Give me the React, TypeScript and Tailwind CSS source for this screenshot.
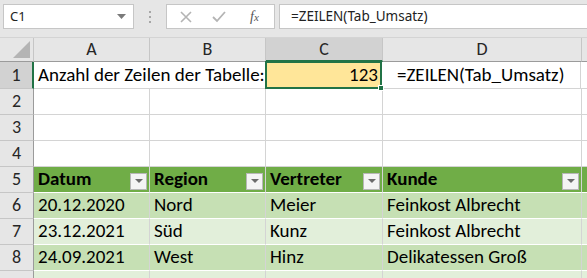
import React from 'react';

const font = { fontFamily: 'Carlito, Calibri, "Open Sans", sans-serif' };

const cols = [
    { key: 'A', w: 'w-[116px]' },
    { key: 'B', w: 'w-[116px]' },
    { key: 'C', w: 'w-[117px]' },
    { key: 'D', w: 'w-[199px]' },
];

const FilterBtn = () => (
    <div className="absolute right-[2px] bottom-[2px] w-[17px] h-[17px] bg-[#f4f4f4] border border-[#b7b7b7] flex items-center justify-center">
        <svg width="8" height="5" viewBox="0 0 8 5">
            <path d="M0 0 L8 0 L4 4 Z" fill="#6b6b6b" />
        </svg>
    </div>
);

const tableRows = [
    { n: 6, bg: 'bg-[#c6e0b4]', cells: ['20.12.2020', 'Nord', 'Meier', 'Feinkost Albrecht'] },
    { n: 7, bg: 'bg-[#e2efda]', cells: ['23.12.2021', 'Süd', 'Kunz', 'Feinkost Albrecht'] },
    { n: 8, bg: 'bg-[#c6e0b4]', cells: ['24.09.2021', 'West', 'Hinz', 'Delikatessen Groß'] },
];

const RowHead = ({ n, active }: { n?: number; active?: boolean }) => (
    <div
        className={`w-[34px] shrink-0 flex items-center justify-center text-[18px] text-[#262626] border-b border-[#c6c6c6] ${
            active ? 'bg-[#d2d2d2] border-r-2 border-r-[#217346]' : 'bg-[#e6e6e6] border-r border-r-[#9b9b9b]'
        }`}
    >
        {n}
    </div>
);

export default function App() {
    return (
        <div className="w-[587px] h-[278px] overflow-hidden bg-white select-none" style={font}>
            {/* Formula bar */}
            <div className="h-[38px] bg-[#e6e6e6] flex items-start pt-[4px] pl-[3px] gap-0 border-b border-[#d4d4d4]">
                <div className="w-[131px] h-[25px] bg-white border border-[#c6c6c6] flex items-center justify-between pl-[6px] pr-[7px]" style={{ fontFamily: '"Noto Sans", "Open Sans", sans-serif' }}>
                    <span className="text-[13px] text-[#222]">C1</span>
                    <svg width="9" height="5" viewBox="0 0 9 5">
                        <path d="M0 0 L9 0 L4.5 5 Z" fill="#7a7a7a" />
                    </svg>
                </div>
                <div className="w-[32px] h-[25px] flex flex-col items-center justify-center gap-[3px]">
                    <span className="w-[2px] h-[2px] bg-[#a6a6a6]" />
                    <span className="w-[2px] h-[2px] bg-[#a6a6a6]" />
                    <span className="w-[2px] h-[2px] bg-[#a6a6a6]" />
                </div>
                <div className="w-[109px] h-[25px] bg-white border border-[#c6c6c6] flex items-center pl-[13px] gap-[20px]">
                    <svg width="12" height="12" viewBox="0 0 12 12">
                        <path d="M1 1 L11 11 M11 1 L1 11" stroke="#b4b4b4" strokeWidth="1.6" />
                    </svg>
                    <svg width="14" height="12" viewBox="0 0 14 12">
                        <path d="M1 6 L5 10 L13 1" stroke="#b4b4b4" strokeWidth="1.8" fill="none" />
                    </svg>
                    <span className="text-[14px] italic text-[#555] ml-[4px]" style={{ fontFamily: '"Liberation Serif", serif' }}>
                        f<span className="text-[11px]">x</span>
                    </span>
                </div>
                <div className="ml-[4px] flex-1 h-[25px] bg-white border border-[#c6c6c6] border-r-0 flex items-center pl-[11px]" style={{ fontFamily: '"Noto Sans", "Open Sans", sans-serif' }}>
                    <span className="text-[13.5px] text-[#222]">=ZEILEN(Tab_Umsatz)</span>
                </div>
            </div>

            {/* Column headers */}
            <div className="h-[24px] flex bg-[#e6e6e6]">
                <div className="w-[34px] shrink-0 relative border-r border-[#c6c6c6] border-b border-b-[#9b9b9b]">
                    <svg className="absolute right-[3px] bottom-[3px]" width="17" height="17" viewBox="0 0 17 17">
                        <path d="M17 0 L17 17 L0 17 Z" fill="#b4b4b4" />
                    </svg>
                </div>
                {cols.map((c) => (
                    <div
                        key={c.key}
                        className={`${c.w} shrink-0 flex items-center justify-center text-[18px] text-[#262626] border-r border-[#c6c6c6] ${
                            c.key === 'C' ? 'bg-[#d2d2d2] border-b-2 border-b-[#217346]' : 'border-b border-b-[#9b9b9b]'
                        }`}
                    >
                        {c.key}
                    </div>
                ))}
                <div className="flex-1 border-b border-b-[#9b9b9b]" />
            </div>

            {/* Row 1 */}
            <div className="h-[27px] flex">
                <RowHead n={1} active />
                <div className="w-[232px] shrink-0 flex items-center pl-[4px] text-[19px] text-black border-r border-b border-[#d4d4d4] whitespace-nowrap">
                    Anzahl der Zeilen der Tabelle:
                </div>
                <div className="w-[117px] shrink-0 relative bg-[#ffe699] border-2 border-[#217346] flex items-center justify-end pr-[2px] text-[19px] text-black -ml-[1px] -mt-[1px] h-[28px]">
                    123
                    <div className="absolute -right-[4px] -bottom-[4px] w-[6px] h-[6px] bg-[#217346] border border-white" />
                </div>
                <div className="w-[199px] shrink-0 flex items-center pl-[15px] text-[19px] text-black border-r border-b border-[#d4d4d4] whitespace-nowrap">
                    =ZEILEN(Tab_Umsatz)
                </div>
                <div className="flex-1 border-b border-[#d4d4d4]" />
            </div>

            {/* Rows 2-4 */}
            {[2, 3, 4].map((n) => (
                <div key={n} className="h-[26px] flex">
                    <RowHead n={n} />
                    {cols.map((c) => (
                        <div key={c.key} className={`${c.w} shrink-0 border-r border-b border-[#d4d4d4]`} />
                    ))}
                    <div className="flex-1 border-b border-[#d4d4d4]" />
                </div>
            ))}

            {/* Row 5 table header */}
            <div className="h-[26px] flex">
                <RowHead n={5} />
                {['Datum', 'Region', 'Vertreter', 'Kunde'].map((h, i) => (
                    <div
                        key={h}
                        className={`${cols[i].w} shrink-0 relative bg-[#70ad47] flex items-center pl-[4px] text-[19px] font-bold text-black border-r border-[#d4d4d4] border-b border-b-white`}
                    >
                        {h}
                        <FilterBtn />
                    </div>
                ))}
                <div className="flex-1 bg-[#70ad47] border-b border-b-white" />
            </div>

            {/* Data rows */}
            {tableRows.map((r) => (
                <div key={r.n} className="h-[26px] flex">
                    <RowHead n={r.n} />
                    {r.cells.map((t, i) => (
                        <div
                            key={i}
                            className={`${cols[i].w} shrink-0 ${r.bg} flex items-center pl-[4px] text-[19px] text-black border-r border-[#d4d4d4] border-b border-b-white whitespace-nowrap`}
                        >
                            {t}
                        </div>
                    ))}
                    <div className={`flex-1 ${r.bg} border-b border-b-white`} />
                </div>
            ))}

            {/* Row 9 (only its top edge is visible) */}
            <div className="h-[26px] flex">
                <RowHead />
                {cols.map((c) => (
                    <div key={c.key} className={`${c.w} shrink-0 bg-[#e2efda] border-r border-[#d4d4d4]`} />
                ))}
                <div className="flex-1 bg-[#e2efda]" />
            </div>
        </div>
    );
}
